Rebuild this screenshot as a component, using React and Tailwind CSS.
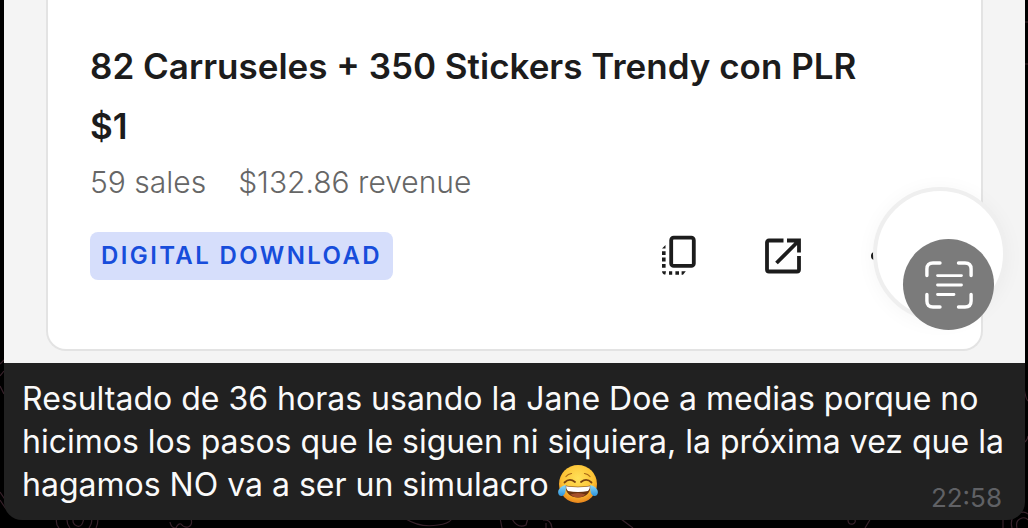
function DuplicateIcon() {
  return (
    <svg viewBox="0 0 36 42" className="h-[42px] w-9" fill="none" stroke="#1c1c1c" aria-hidden="true">
      <rect x="10.2" y="2.7" width="22.600" height="28.200" rx="2.5" strokeWidth="3.800" />
      <g fill="#1c1c1c" stroke="none">
        <path d="M1 13.5 4.5 10v3.5zM1 16.3h3.6V20H1zM1 22.6h3.6v3.8H1zM1 29h3.6v3.8H1zM1 36.2h4l-.6 3.4Q1.4 39.6 1 36.2zM8 36.2h3.2v3.6H8zM14.4 36.2H18v3.6h-3.6zM20.6 36.2h4.2L22 39.8h-1.4z" />
      </g>
    </svg>
  );
}

function ExternalIcon() {
  return (
    <svg viewBox="0 0 38 38" className="size-[38px]" fill="none" stroke="#1c1c1c" strokeWidth="3.800" aria-hidden="true">
      <path d="M19.500 3.500H5Q3 3.500 3 5.500v27q0 2 2 2h28q2 0 2-2V19" />
      <path d="M23 3.500h12v12M33.500 5 12.500 26" />
    </svg>
  );
}

function ScanTextIcon() {
  return (
    <svg viewBox="0 0 48 48" className="size-12" fill="none" stroke="#fff" strokeWidth="3.4" strokeLinecap="round" aria-hidden="true">
      <path d="M1.9 14.5V8Q1.9 2 8 2h7M33.500 2H40q6.100 0 6.100 6v6.500M46.100 33.500V40q0 6-6.100 6h-6.500M15 46H8q-6.100 0-6.100-6v-6.500" />
      <path strokeWidth="2.800" d="M12.500 14.600h24M12.500 24h24M12.500 33.500h16.500" />
    </svg>
  );
}

function JoyEmoji() {
  return (
    <svg viewBox="0 0 40 40" className="inline-block size-10 align-[-8px]" role="img" aria-label="😂">
      <defs>
        <radialGradient id="face" cx=".5" cy=".35" r=".65">
          <stop offset="0" stopColor="#ffe158" />
          <stop offset=".65" stopColor="#fdc234" />
          <stop offset="1" stopColor="#e8841c" />
        </radialGradient>
        <linearGradient id="tear" x1="0" y1="0" x2="0" y2="1">
          <stop offset="0" stopColor="#8bd9fa" />
          <stop offset="1" stopColor="#2c94dc" />
        </linearGradient>
      </defs>
      <circle cx="20" cy="20" r="19" fill="url(#face)" />
      <path d="M7 21.500Q20 24 33 21.500 31.500 33.500 20 33.500T7 21.500z" fill="#68320f" />
      <path d="M8 22.200q12 2.300 24 0-.2 3.800-2 4.800-10 2-20 0-1.800-1-2-4.800z" fill="#fff" />
      <path d="M12.500 30.500q7.500-3 15 0-3 3-7.500 3t-7.500-3z" fill="#a5502a" />
      <g fill="none" stroke="#7a4410" strokeLinecap="round" strokeWidth="1.800">
        <path d="M6.500 18.500q5-5 10.500-.5M23 18q5.500-4.500 10.500.5" />
        <path strokeWidth="1.200" stroke="#a86615" d="M8 12.500q2-2.500 5.500-3M26.500 9.500q3.500.5 5.500 3" />
      </g>
      <path d="M7.800 21Q1 22.500.1 28q.2 4.500 4 4Q8.500 30.500 7.800 21zM32.200 21q6.800 1.500 7.700 7-.2 4.500-4 4-4.400-1.500-3.700-11z" fill="url(#tear)" />
    </svg>
  );
}

function Wallpaper() {
  return (
    <svg viewBox="0 0 1028 528" className="absolute inset-0 size-full" fill="none" stroke="#38222b" strokeWidth="1.200" aria-hidden="true">
      <path d="M57 516q-2 8 2 12M67 516q-1 7 3 12M74 516q-3 8 3 10t7-10M90 516q4 5-1 12M97 516q2 6-1 12M170 522q1 6 6 6 2-5 5-4 3 4 7 3 5-2 3-8" />
      <path d="M406 519q14 9 32 6 10-1 14-6M500 518l2 10M512 519q6 10 14 6l2-7M543 520q8-1 9 8M546 528v-5M621 519l12 9M848 520q0 5 5 4 4-2 1-6M871 518l-6 10M1003 518v10" />
      <path d="M1012 528q-3-11 7-15 6-2 9 1M1017 528q-2-8 5-10 4-1 6 2M1024 388q2 12 4 13M1025 442q3-3 3-6M1025 22h3M1025 64h3M0 364l4-4M0 376l4-5M0 386l4 8M0 492l6 9M0 500l6 9" />
    </svg>
  );
}

export default function App() {
  return (
    <main className="relative min-h-screen overflow-hidden bg-black pr-[3px] pb-2 pl-1 font-['Inter','Liberation_Sans',sans-serif]">
      <Wallpaper />
      <article className="relative overflow-hidden rounded-b-[18px] bg-[#212121]">
        <section className="relative bg-[#f4f4f4] pr-[42px] pb-3 pl-[42px]">
          <div className="rounded-b-[20px] border-2 border-t-0 border-[#e3e3e3] bg-white px-[42px] pt-10 pb-[69px] text-[#1c1c1c]">
            <h1 className="text-[35px] leading-[52px] font-semibold whitespace-nowrap">
              82 Carruseles + 350 Stickers Trendy con PLR
            </h1>
            <p className="pt-2 text-[35px] leading-[52px] font-semibold">$1</p>
            <p className="flex gap-8 pt-3 text-[30px] leading-9 font-light text-[#666]">
              <span>59 sales</span>
              <span>$132.86 revenue</span>
            </p>
            <div className="flex items-center justify-between pt-8">
              <span className="rounded-[8px] bg-[#d6defb] px-[11px] text-[24px] leading-[48px] font-semibold tracking-widest text-[#174ddb]">
                DIGITAL DOWNLOAD
              </span>
              <div className="flex items-center gap-[67px]">
                <button type="button" aria-label="Duplicar"><DuplicateIcon /></button>
                <button type="button" aria-label="Abrir"><ExternalIcon /></button>
                <button type="button" aria-label="Más opciones">
                  <svg viewBox="0 0 70 8" className="h-2 w-[70px]" fill="#1c1c1c" aria-hidden="true">
                    <circle cx="6" cy="4" r="4" />
                    <circle cx="20" cy="4" r="4" />
                    <circle cx="34" cy="4" r="4" />
                  </svg>
                </button>
              </div>
            </div>
          </div>
          <div className="absolute right-[18px] bottom-[42px] size-[134px] rounded-full border-4 border-[#efefef] bg-white shadow-[0_2px_20px_rgba(0,0,0,0.04)]" />
          <button type="button" aria-label="Texto en vivo" className="absolute right-[31px] bottom-[33px] flex size-[91px] items-center justify-center rounded-full bg-[#7b7b7b]">
            <ScanTextIcon />
          </button>
        </section>
        <div className="px-[18px] pt-[14px] pb-2">
          <p className="text-[32px] leading-[43px] text-[#fafafa]">
            <span className="block whitespace-nowrap">Resultado de 36 horas usando la Jane Doe a medias porque no</span>
            <span className="block whitespace-nowrap">hicimos los pasos que le siguen ni siquiera, la próxima vez que la</span>
            <span className="block whitespace-nowrap">hagamos NO va a ser un simulacro <JoyEmoji /></span>
          </p>
          <time className="-mt-[22px] block pr-[5px] text-right text-[26px] leading-7 text-[#606165]">22:58</time>
        </div>
      </article>
    </main>
  );
}
